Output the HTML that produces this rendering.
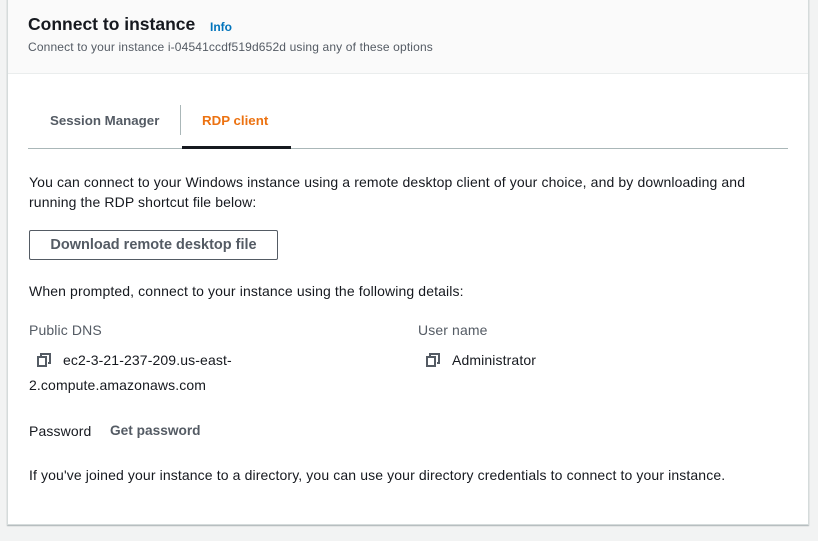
<!DOCTYPE html>
<html><head><meta charset="utf-8"><style>
*{box-sizing:border-box;margin:0;padding:0}
body{width:818px;height:541px;background:#f2f3f3;font-family:"Liberation Sans",sans-serif;color:#16191f;position:relative;overflow:hidden}
.card{position:absolute;left:7px;top:-2px;width:802px;height:527px;background:#fff;border:1px solid #d5dbdb;border-top:none;box-shadow:0 1px 1px rgba(0,28,36,.3)}
.hdr{height:76px;background:#fafafa;border-bottom:1px solid #eaeded;position:relative}
.t{position:absolute;white-space:nowrap}
.b{font-size:14px;letter-spacing:0.12px}
</style></head><body>
<div class="card"><div class="hdr"></div></div>
<div class="t" style="left:28px;top:14px;font-size:17.5px;font-weight:bold">Connect to instance</div>
<div class="t" style="left:210px;top:20px;font-size:12px;font-weight:bold;color:#0073bb">Info</div>
<div class="t" style="left:28px;top:40px;font-size:12px;letter-spacing:0.15px;color:#545b64">Connect to your instance i-04541ccdf519d652d using any of these options</div>

<div class="t" style="left:50px;top:113px;font-size:13.3px;font-weight:bold;color:#545b64">Session Manager</div>
<div class="t" style="left:180px;top:105px;width:1px;height:30px;background:#aab7b8"></div>
<div class="t" style="left:202px;top:113px;font-size:13.3px;font-weight:bold;color:#ec7211">RDP client</div>
<div class="t" style="left:28px;top:148px;width:760px;height:1px;background:#aab7b8"></div>
<div class="t" style="left:182px;top:146px;width:109px;height:3px;background:#16191f"></div>

<div class="t b" style="left:29px;top:172px;line-height:20px;white-space:normal;width:740px">You can connect to your Windows instance using a remote desktop client of your choice, and by downloading and running the RDP shortcut file below:</div>
<div class="t" style="left:29px;top:230px;width:249px;height:30px;border:1px solid #545b64;border-radius:2px;font-size:14.5px;font-weight:bold;color:#545b64;text-align:center;line-height:28px">Download remote desktop file</div>
<div class="t b" style="left:29px;top:283px">When prompted, connect to your instance using the following details:</div>

<div class="t b" style="left:29px;top:322px;color:#545b64">Public DNS</div>
<div class="t b" style="left:418px;top:322px;color:#545b64">User name</div>
<svg class="t" style="left:37px;top:353px" width="14" height="14" viewBox="0 0 14 14"><path d="M4 3V1h9v9h-2" fill="none" stroke="#545b64" stroke-width="2"/><rect x="1" y="4" width="8" height="9" fill="none" stroke="#545b64" stroke-width="2"/></svg>
<div class="t b" style="left:63px;top:352px">ec2-3-21-237-209.us-east-</div>
<div class="t b" style="left:29px;top:377px">2.compute.amazonaws.com</div>
<svg class="t" style="left:426px;top:353px" width="14" height="14" viewBox="0 0 14 14"><path d="M4 3V1h9v9h-2" fill="none" stroke="#545b64" stroke-width="2"/><rect x="1" y="4" width="8" height="9" fill="none" stroke="#545b64" stroke-width="2"/></svg>
<div class="t b" style="left:452px;top:352px">Administrator</div>

<div class="t b" style="left:29px;top:423px">Password</div>
<div class="t" style="left:110px;top:423px;font-size:13.7px;font-weight:bold;color:#545b64">Get password</div>
<div class="t b" style="left:29px;top:467px">If you've joined your instance to a directory, you can use your directory credentials to connect to your instance.</div>
</body></html>
